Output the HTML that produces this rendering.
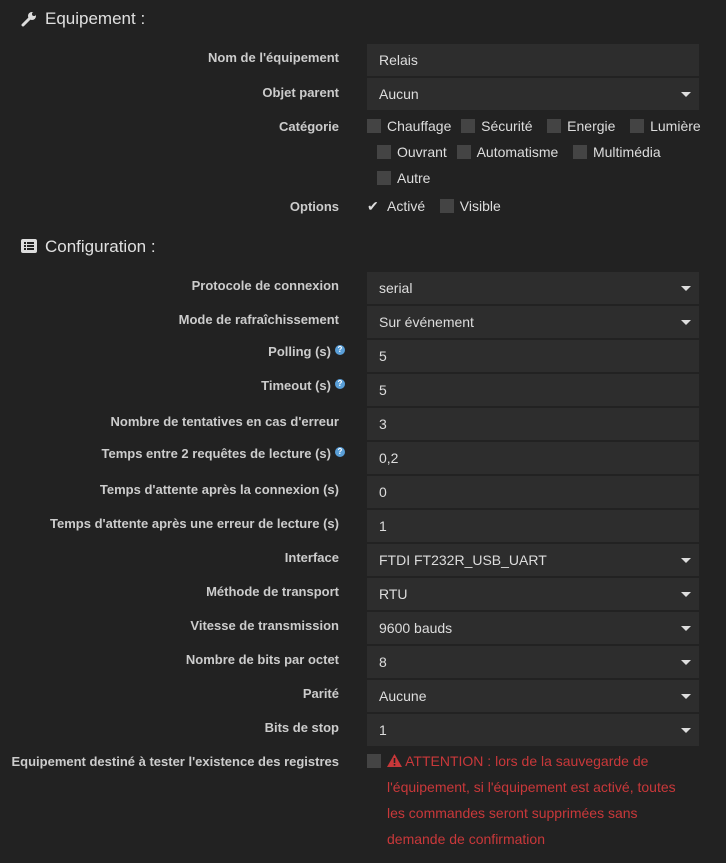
<!DOCTYPE html>
<html><head><meta charset="utf-8"><style>
body{margin:0;width:726px;height:863px;background:#222;font-family:"Liberation Sans",sans-serif;color:#ccc;position:relative;overflow:hidden}
.a{position:absolute;white-space:nowrap}
.l{position:absolute;right:387px;font-size:13px;font-weight:bold;color:#ccc;text-align:right;white-space:nowrap}
.in{position:absolute;left:367px;width:332px;height:32px;background:#2d2d2d;font-size:14px;color:#ddd;box-sizing:border-box;padding-left:12px;line-height:32px}
.in.s:after{content:"";position:absolute;right:8px;top:14px;border-left:5px solid transparent;border-right:5px solid transparent;border-top:5px solid #ddd}
.cb{display:inline-block;width:14px;height:14px;background:#444;vertical-align:-2px;margin-right:6px}
.c{position:absolute;font-size:14px;color:#ddd;white-space:nowrap;word-spacing:1px}
.h{position:absolute;left:45px;font-size:17px;color:#e0e0e0}
.q{display:inline-block;width:10px;height:10px;border-radius:50%;background:#5a9fd8;color:#fff;font-size:8px;line-height:10px;text-align:center;vertical-align:4px;margin-left:4px}
</style></head><body>
<svg class="a" style="left:21px;top:11px" width="16" height="16" viewBox="0 0 16 16"><path d="M2 14 L8 8" stroke="#ddd" stroke-width="3" stroke-linecap="round"/><circle cx="11" cy="5" r="4" fill="#ddd"/><circle cx="13" cy="3" r="2" fill="#222"/></svg>
<div class="h" style="top:9px">Equipement :</div>
<div class="l" style="top:50px">Nom de l'équipement</div><div class="in" style="top:44px">Relais</div>
<div class="l" style="top:85px">Objet parent</div><div class="in s" style="top:78px">Aucun</div>
<div class="l" style="top:119px">Catégorie</div>
<div class="c" style="left:367px;top:118px"><span class="cb"></span>Chauffage &nbsp;<span class="cb"></span>Sécurité &nbsp;&nbsp;<span class="cb"></span>Energie &nbsp;&nbsp;<span class="cb"></span>Lumière</div>
<div class="c" style="left:377px;top:144px"><span class="cb"></span>Ouvrant &nbsp;<span class="cb"></span>Automatisme &nbsp;&nbsp;<span class="cb"></span>Multimédia</div>
<div class="c" style="left:377px;top:170px"><span class="cb"></span>Autre</div>
<div class="l" style="top:199px">Options</div>
<div class="c" style="left:367px;top:198px"><span style="display:inline-block;width:14px;margin-right:6px;color:#ddd">✔</span>Activé &nbsp;&nbsp;<span class="cb"></span>Visible</div>
<svg class="a" style="left:21px;top:239px" width="16" height="14" viewBox="0 0 16 14"><rect width="16" height="14" rx="2" fill="#ddd"/><g fill="#222"><rect x="3" y="3" width="2" height="2"/><rect x="3" y="6" width="2" height="2"/><rect x="3" y="9" width="2" height="2"/><rect x="6" y="3" width="7" height="2"/><rect x="6" y="6" width="7" height="2"/><rect x="6" y="9" width="7" height="2"/></g></svg>
<div class="h" style="top:237px">Configuration :</div>

<div class="l" style="top:278px">Protocole de connexion</div><div class="in s" style="top:272px">serial</div>
<div class="l" style="top:312px">Mode de rafraîchissement</div><div class="in s" style="top:306px">Sur événement</div>
<div class="l" style="top:344px;right:381px">Polling (s)<span class="q">?</span></div><div class="in" style="top:340px">5</div>
<div class="l" style="top:378px;right:381px">Timeout (s)<span class="q">?</span></div><div class="in" style="top:374px">5</div>
<div class="l" style="top:414px">Nombre de tentatives en cas d'erreur</div><div class="in" style="top:408px">3</div>
<div class="l" style="top:446px;right:381px">Temps entre 2 requêtes de lecture (s)<span class="q">?</span></div><div class="in" style="top:442px">0,2</div>
<div class="l" style="top:482px">Temps d'attente après la connexion (s)</div><div class="in" style="top:476px">0</div>
<div class="l" style="top:516px">Temps d'attente après une erreur de lecture (s)</div><div class="in" style="top:510px">1</div>
<div class="l" style="top:550px">Interface</div><div class="in s" style="top:544px">FTDI FT232R_USB_UART</div>
<div class="l" style="top:584px">Méthode de transport</div><div class="in s" style="top:578px">RTU</div>
<div class="l" style="top:618px">Vitesse de transmission</div><div class="in s" style="top:612px">9600 bauds</div>
<div class="l" style="top:652px">Nombre de bits par octet</div><div class="in s" style="top:646px">8</div>
<div class="l" style="top:686px">Parité</div><div class="in s" style="top:680px">Aucune</div>
<div class="l" style="top:720px">Bits de stop</div><div class="in s" style="top:714px">1</div>
<div class="l" style="top:754px">Equipement destiné à tester l'existence des registres</div>
<div class="a" style="left:367px;top:754px;width:14px;height:14px;background:#444"></div>
<div class="a" style="left:387px;top:748px;font-size:14px;line-height:26px;color:#c9383a;white-space:normal;width:300px"><svg width="15" height="13" viewBox="0 0 15 13" style="vertical-align:-1px"><path d="M7.5 0 L15 13 L0 13Z" fill="#c9383a"/><rect x="6.7" y="4" width="1.6" height="5" fill="#222"/><rect x="6.7" y="10" width="1.6" height="1.6" fill="#222"/></svg> ATTENTION : lors de la sauvegarde de l'équipement, si l'équipement est activé, toutes les commandes seront supprimées sans demande de confirmation</div>
</body></html>
